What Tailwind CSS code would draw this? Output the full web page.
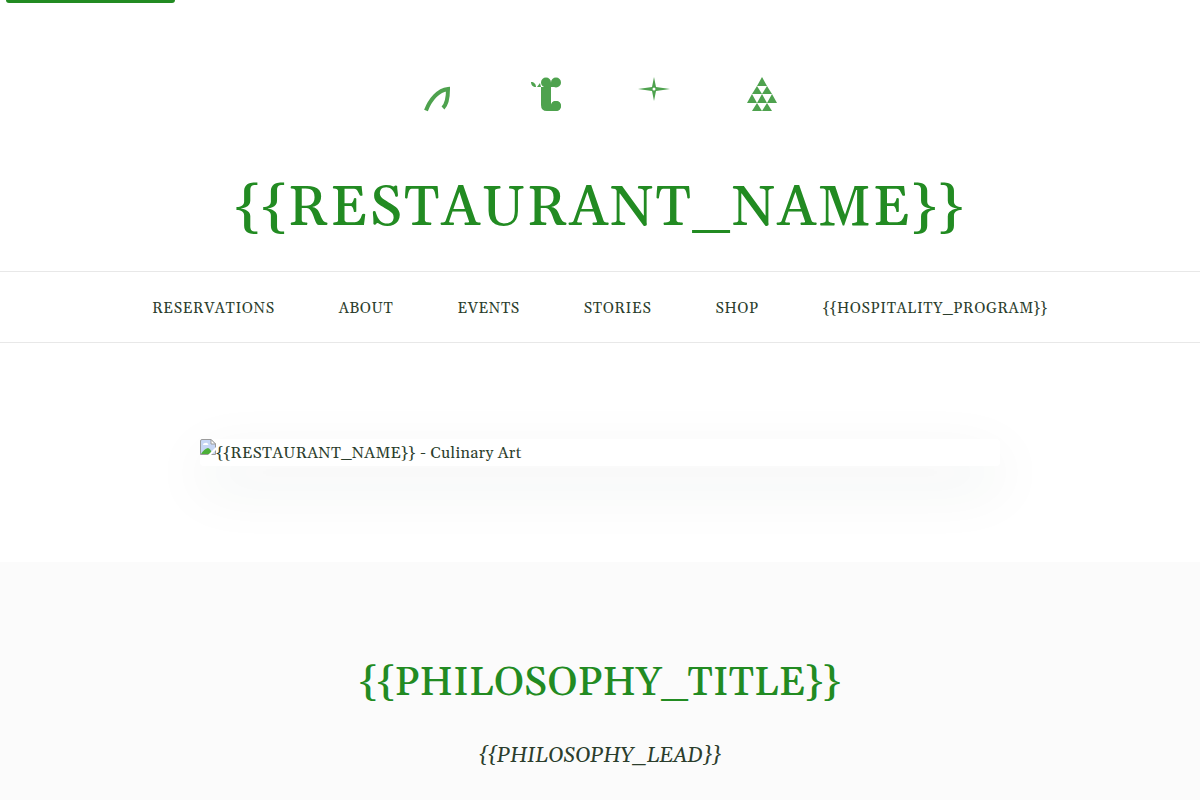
<!DOCTYPE html>
<html lang="en">
<head>
<meta charset="utf-8">
<meta name="viewport" content="width=device-width, initial-scale=1">
<title>{{RESTAURANT_NAME}}</title>
<script src="https://cdn.jsdelivr.net/npm/@tailwindcss/browser@4"></script>
</head>
<body class="bg-white font-[Gelasio,Georgia,'Liberation_Serif',serif] text-base text-[#2c3e2d]">
<a href="#main" aria-label="Skip to main content" class="absolute left-[6px] top-0 h-[3px] w-[169px] rounded-b bg-[#228b22]"></a>

<header>
  <div class="flex justify-center gap-[60px] pt-[71px] text-[#228b22]">
    <svg class="size-12 opacity-80" viewBox="0 0 48 48" fill="none" stroke="currentColor" stroke-width="4" aria-hidden="true">
      <path d="M12 39.500C16 29 24 19 34 18C34 27 33 33 29 37"/>
    </svg>
    <svg class="size-12 opacity-80" viewBox="0 0 48 48" fill="currentColor" aria-hidden="true">
      <path d="M19 16H29V34A5 5 0 1 1 34 40H25Q19 40 19 34Z"/>
      <circle cx="24" cy="11.500" r="5"/><circle cx="34" cy="11.500" r="5"/><circle cx="34" cy="35" r="5"/>
      <path d="M24 12H34V16H24Z"/>
      <path d="M9 11C12 11 14 13 14 16C11 16 9 14 9 11ZM15 16L18 12L19 16Z"/>
    </svg>
    <svg class="size-12 opacity-80" viewBox="0 0 48 48" fill="currentColor" aria-hidden="true">
      <path d="M24 6L26 16L40 18L26 20L24 30L22 20L8 18L22 16Z"/>
      <circle cx="24" cy="18" r="1.500" fill="white"/>
    </svg>
    <svg class="size-12 opacity-80" viewBox="0 0 48 48" fill="currentColor" aria-hidden="true">
      <path d="M24 6L29 15H19ZM19 15L24 23H14ZM29 15L34 23H24ZM14 23L19 32H9ZM24 23L29 32H19ZM34 23L39 32H29ZM19 32L24 40H14ZM29 32L34 40H24Z"/>
    </svg>
  </div>
  <h1 class="mt-[50px] pb-[22px] text-center text-[56px] leading-[80px] font-medium tracking-[2px] text-[#228b22]">{{RESTAURANT_NAME}}</h1>
</header>

<nav class="border-y border-[#e8e8e8] pt-[26px] pb-[22px]" aria-label="Main">
  <ul class="flex flex-wrap justify-center gap-x-16 text-[15px] leading-[22px] tracking-[0.04em]">
    <li><a href="#">RESERVATIONS</a></li>
    <li><a href="#">ABOUT</a></li>
    <li><a href="#">EVENTS</a></li>
    <li><a href="#">STORIES</a></li>
    <li><a href="#">SHOP</a></li>
    <li><a href="#">{{HOSPITALITY_PROGRAM}}</a></li>
  </ul>
</nav>

<main id="main">
  <section class="px-8 py-24">
    <div class="mx-auto flex max-w-[800px] rounded bg-white shadow-[0_20px_60px_rgba(44,62,45,0.08)]">
      <svg class="size-4 shrink-0" viewBox="0 0 16 16" aria-hidden="true">
        <path d="M2 .500H11L15.500 5V15.500H.500V2Q.500 .500 2 .500Z" fill="#c6d6f5" stroke="#9b9b9b"/>
        <path d="M11 .500V5H15.500Z" fill="white" stroke="#9b9b9b"/>
        <path d="M3 6Q3 4 5 4Q7 3 8 5Q9 6 8 6Z" fill="white"/>
        <path d="M1 15Q4 10 8 9Q11 10 12 15Z" fill="#4caf38"/>
        <path d="M8 16L16 8V11L11 16Z" fill="white"/>
      </svg>
      <p class="pt-0.5 pb-px leading-6 tracking-[0.02em]">{{RESTAURANT_NAME}} - Culinary Art</p>
    </div>
  </section>
  <section class="bg-[#fbfbfb] px-8 pt-[98px] pb-24 text-center">
    <h2 class="text-[40px] leading-[48px] font-medium text-[#228b22]">{{PHILOSOPHY_TITLE}}</h2>
    <p class="mt-8 text-[21px] leading-8 italic">{{PHILOSOPHY_LEAD}}</p>
  </section>
</main>
</body>
</html>
